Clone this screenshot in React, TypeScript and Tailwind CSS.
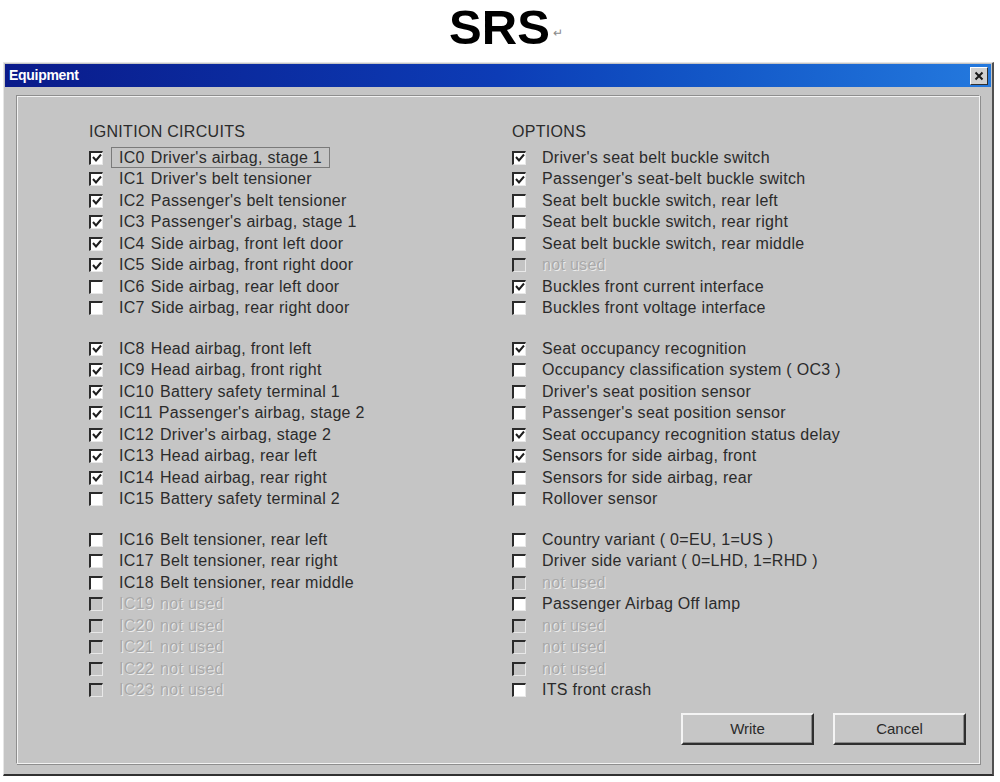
import React from "react";

type Item = { code?: string; label: string; checked?: boolean; disabled?: boolean };

const ignitionGroups: Item[][] = [
  [
    { code: "IC0", label: "Driver's airbag, stage 1", checked: true },
    { code: "IC1", label: "Driver's belt tensioner", checked: true },
    { code: "IC2", label: "Passenger's belt tensioner", checked: true },
    { code: "IC3", label: "Passenger's airbag, stage 1", checked: true },
    { code: "IC4", label: "Side airbag, front left door", checked: true },
    { code: "IC5", label: "Side airbag, front right door", checked: true },
    { code: "IC6", label: "Side airbag, rear left door" },
    { code: "IC7", label: "Side airbag, rear right door" },
  ],
  [
    { code: "IC8", label: "Head airbag, front left", checked: true },
    { code: "IC9", label: "Head airbag, front right", checked: true },
    { code: "IC10", label: "Battery safety terminal 1", checked: true },
    { code: "IC11", label: "Passenger's airbag, stage 2", checked: true },
    { code: "IC12", label: "Driver's airbag, stage 2", checked: true },
    { code: "IC13", label: "Head airbag, rear left", checked: true },
    { code: "IC14", label: "Head airbag, rear right", checked: true },
    { code: "IC15", label: "Battery safety terminal 2" },
  ],
  [
    { code: "IC16", label: "Belt tensioner, rear left" },
    { code: "IC17", label: "Belt tensioner, rear right" },
    { code: "IC18", label: "Belt tensioner, rear middle" },
    { code: "IC19", label: "not used", disabled: true },
    { code: "IC20", label: "not used", disabled: true },
    { code: "IC21", label: "not used", disabled: true },
    { code: "IC22", label: "not used", disabled: true },
    { code: "IC23", label: "not used", disabled: true },
  ],
];

const optionGroups: Item[][] = [
  [
    { label: "Driver's seat belt buckle switch", checked: true },
    { label: "Passenger's seat-belt buckle switch", checked: true },
    { label: "Seat belt buckle switch, rear left" },
    { label: "Seat belt buckle switch, rear right" },
    { label: "Seat belt buckle switch, rear middle" },
    { label: "not used", disabled: true },
    { label: "Buckles front current interface", checked: true },
    { label: "Buckles front voltage interface" },
  ],
  [
    { label: "Seat occupancy recognition", checked: true },
    { label: "Occupancy classification system ( OC3 )" },
    { label: "Driver's seat position sensor" },
    { label: "Passenger's seat position sensor" },
    { label: "Seat occupancy recognition status delay", checked: true },
    { label: "Sensors for side airbag, front", checked: true },
    { label: "Sensors for side airbag, rear" },
    { label: "Rollover sensor" },
  ],
  [
    { label: "Country variant ( 0=EU, 1=US )" },
    { label: "Driver side variant ( 0=LHD, 1=RHD )" },
    { label: "not used", disabled: true },
    { label: "Passenger Airbag Off lamp" },
    { label: "not used", disabled: true },
    { label: "not used", disabled: true },
    { label: "not used", disabled: true },
    { label: "ITS front crash" },
  ],
];

function CheckBox({ checked, disabled }: { checked?: boolean; disabled?: boolean }) {
  return (
    <span
      className={
        "flex h-[14px] w-[14px] shrink-0 items-center justify-center border-t-2 border-l-2 border-b border-r border-t-[#2a2a2a] border-l-[#2a2a2a] border-b-[#e8e8e8] border-r-[#e8e8e8] " +
        (disabled ? "bg-[#c4c4c4]" : "bg-white")
      }
    >
      {checked && (
        <svg width="10" height="10" viewBox="0 0 10 10">
          <path d="M1 4 L4 7.5 L9 1.5" fill="none" stroke="#1e1e1e" strokeWidth="2" />
        </svg>
      )}
    </span>
  );
}

function Row({ item, focused, withCode }: { item: Item; focused?: boolean; withCode: boolean }) {
  const textTone = item.disabled
    ? "text-[#a9a9a9] [text-shadow:1px_1px_0_#ececec]"
    : "text-[#2b2b2b]";
  return (
    <div className="flex h-[21.5px] items-center">
      <CheckBox checked={item.checked} disabled={item.disabled} />
      <div
        className={
          "flex h-[21px] items-center border " +
          (withCode ? "ml-[8px] px-[7px] " : "ml-[15px] ") +
          (focused ? "border-[#7a7a7a] " : "border-transparent ") +
          textTone
        }
      >
        {withCode && <span className="mr-[6px]">{item.code}</span>}
        <span>{item.label}</span>
      </div>
    </div>
  );
}

function Column({ title, groups, withCode }: { title: string; groups: Item[][]; withCode: boolean }) {
  return (
    <div className="flex flex-col">
      <div className="mb-[4px] h-[22px] text-[16px] leading-[22px] text-[#2b2b2b]">{title}</div>
      <div className="flex flex-col gap-[19px]">
        {groups.map((group, gi) => (
          <div key={gi} className="flex flex-col">
            {group.map((item, i) => (
              <Row key={i} item={item} withCode={withCode} focused={withCode && gi === 0 && i === 0} />
            ))}
          </div>
        ))}
      </div>
    </div>
  );
}

function Button({ label }: { label: string }) {
  return (
    <button className="h-[32px] w-[133px] border-2 border-t-[#f4f4f4] border-l-[#f4f4f4] border-b-[#2f2f2f] border-r-[#2f2f2f] bg-[#c6c6c6] text-[15px] text-[#2b2b2b] shadow-[inset_-1px_-1px_0_#8a8a8a]">
      {label}
    </button>
  );
}

export default function App() {
  return (
    <div className="h-[782px] w-[1000px] overflow-hidden bg-white font-['Liberation_Sans',Arial,sans-serif]">
      <div className="flex h-[62px] items-start justify-center pt-[2px]">
        <span className="ml-[12px] text-[49px] font-bold leading-[50px] text-black">SRS</span>
        <span className="mt-[22px] ml-[3px] text-[12px] text-[#8a8a8a]">↵</span>
      </div>

      <div className="ml-[3px] flex h-[714px] w-[991px] flex-col border-t border-l border-t-[#e6e6e6] border-l-[#e6e6e6] border-b-2 border-r-2 border-b-[#303030] border-r-[#505050] bg-[#c5c5c5] p-[1px]">
        <div className="flex h-[23px] items-center justify-between bg-gradient-to-r from-[#0a1a8a] via-[#0d3cb6] to-[#2479de] pl-[4px] pr-[3px]">
          <span className="text-[14px] font-bold tracking-[-0.3px] text-white">Equipment</span>
          <span className="flex h-[18px] w-[18px] items-center justify-center border-t border-l border-t-white border-l-white border-b border-r border-b-[#303030] border-r-[#303030] bg-[#d0d0d0]">
            <svg width="10" height="10" viewBox="0 0 10 10">
              <path d="M1.5 1.5 L8.5 8.5 M8.5 1.5 L1.5 8.5" stroke="#1a1a1a" strokeWidth="2" />
            </svg>
          </span>
        </div>

        <div className="flex flex-1 px-[11px] pt-[8px] pb-[9px]">
          <div className="flex flex-1 flex-col border-t border-l border-t-[#8e8e8e] border-l-[#8e8e8e] border-b border-r border-b-[#f2f2f2] border-r-[#f2f2f2] shadow-[inset_1px_1px_0_#f2f2f2,1px_1px_0_#8e8e8e]">
            <div className="flex pt-[25px] text-[16px] tracking-[0.3px]">
              <div className="ml-[72px] w-[423px]">
                <Column title="IGNITION CIRCUITS" groups={ignitionGroups} withCode />
              </div>
              <Column title="OPTIONS" groups={optionGroups} withCode={false} />
            </div>
            <div className="mt-[12px] flex justify-end gap-[19px] pr-[13px]">
              <Button label="Write" />
              <Button label="Cancel" />
            </div>
          </div>
        </div>
      </div>
    </div>
  );
}
